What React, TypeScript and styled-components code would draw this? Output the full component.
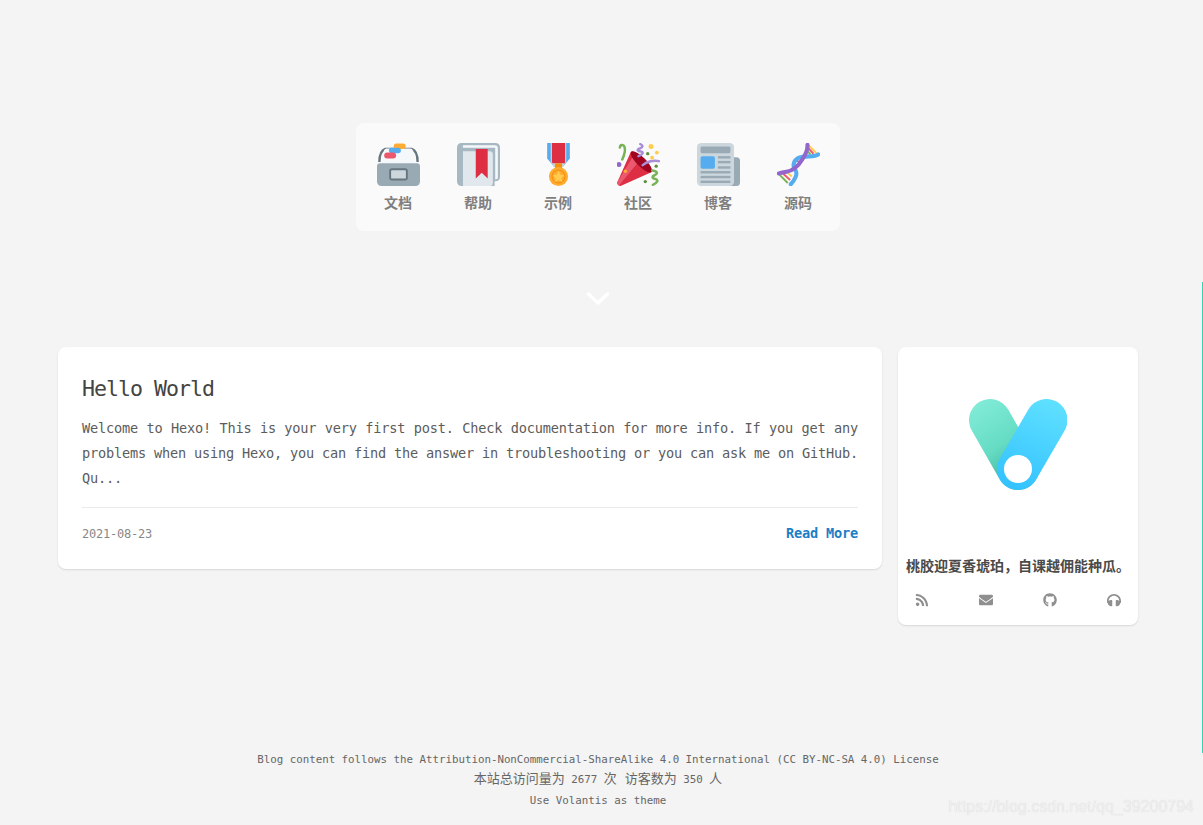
import React from "react";
import styled, { createGlobalStyle } from "styled-components";
import { FaRss, FaEnvelope, FaGithub, FaHeadphones } from "react-icons/fa";

const GlobalStyle = createGlobalStyle`
  html, body {
    margin: 0;
    padding: 0;
    background: #f4f4f4;
  }
  body {
    font-family: "Noto Sans", "Noto Sans CJK SC", sans-serif;
    overflow: hidden;
  }
`;

const mono = `"DejaVu Sans Mono", "Noto Sans CJK SC", monospace`;

const Page = styled.div`
  width: 1196px;
  height: 825px;
  padding-top: 123px;
  box-sizing: border-box;
  display: flex;
  flex-direction: column;
  align-items: center;
`;

const NavPanel = styled.nav`
  width: 484px;
  height: 108px;
  box-sizing: border-box;
  padding: 0 2px;
  display: flex;
  background: #fafafa;
  border-radius: 8px;
`;

const NavItem = styled.a`
  width: 80px;
  display: flex;
  flex-direction: column;
  align-items: center;
  padding-top: 20px;
  color: #7f7f7f;
  font-size: 14px;
  font-weight: 600;
  line-height: 18px;
`;

const NavIcon = styled.svg`
  width: 43px;
  height: 43px;
  margin-bottom: 8px;
`;

const Chevron = styled.svg`
  width: 24px;
  height: 15px;
  margin: 60px 0 41px;
  display: block;
`;

const Main = styled.main`
  width: 1080px;
  display: flex;
  align-items: flex-start;
  gap: 16px;
`;

const Card = styled.section`
  background: #fff;
  border-radius: 8px;
  box-shadow: 0 1px 2px rgba(0, 0, 0, 0.12);
`;

const PostCard = styled(Card)`
  width: 824px;
  height: 222px;
  box-sizing: border-box;
  padding: 24px;
`;

const PostTitle = styled.h2`
  margin: 0 0 10px;
  padding-top: 1px;
  font-family: ${mono};
  font-size: 21.6px;
  letter-spacing: -1px;
  font-weight: 400;
  line-height: 34px;
  color: #444;
`;

const PostBody = styled.p`
  margin: 0;
  font-family: ${mono};
  font-size: 13.6px;
  letter-spacing: -0.19px;
  line-height: 25px;
  color: #5c5c5c;
  text-align: justify;
`;

const PostMeta = styled.div`
  margin-top: 16px;
  border-top: 1px solid #eaeaea;
  padding-top: 17px;
  display: flex;
  justify-content: space-between;
  align-items: center;
`;

const PostDate = styled.span`
  font-family: ${mono};
  font-size: 12px;
  letter-spacing: -0.22px;
  color: #888;
  padding-top: 2px;
`;

const ReadMore = styled.a`
  font-family: ${mono};
  font-size: 13.6px;
  letter-spacing: -0.19px;
  font-weight: 700;
  color: #1c7ec6;
`;

const SideCard = styled(Card)`
  width: 240px;
  height: 278px;
  box-sizing: border-box;
  padding-top: 52px;
  display: flex;
  flex-direction: column;
  align-items: center;
`;

const Logo = styled.svg`
  width: 98px;
  height: 91px;
`;

const Quote = styled.div`
  margin-top: 66px;
  font-size: 14px;
  font-weight: 600;
  line-height: 20px;
  color: #4a4a4a;
  white-space: nowrap;
`;

const Social = styled.div`
  width: 100%;
  box-sizing: border-box;
  margin-top: 17px;
  padding: 0 17px;
  display: flex;
  justify-content: space-between;
  color: #8f8f8f;
  font-size: 14px;
  line-height: 14px;
`;

const Footer = styled.footer`
  margin-top: 126px;
  font-family: ${mono};
  color: #666;
  text-align: center;
  font-size: 10.8px;
  letter-spacing: -0.01px;
`;

const FooterLine = styled.div<{ $height: number }>`
  line-height: ${(p) => p.$height}px;
  white-space: nowrap;
`;

const FooterCjk = styled.span`
  font-size: 13px;
  letter-spacing: 0;
`;

const ScrollBar = styled.div`
  position: fixed;
  top: 282px;
  right: 0;
  width: 1px;
  height: 471px;
  background: #2fd8b5;
`;

const Watermark = styled.div`
  position: fixed;
  right: 9px;
  bottom: 8px;
  font-family: "Liberation Sans", sans-serif;
  font-size: 16px;
  line-height: 20px;
  color: #efefef;
  text-shadow: 0 0 1px #cfcfcf;
`;

const FileBoxIcon = () => (
  <NavIcon viewBox="0 0 36 36">
    <path d="M2 16 C2 9 4 6 7 5 L29 5 C32 6 34 9 34 16" fill="none" stroke="#66757F" strokeWidth="2" />
    <path d="M4 17 L6 6 Q6.5 4.5 8 4.5 L28 4.5 Q29.5 4.5 30 6 L32 17 Z" fill="#F5F8FA" />
    <rect x="14" y="0.5" width="10" height="4.5" rx="2.2" fill="#FFAC33" />
    <rect x="10" y="4" width="10" height="4.5" rx="2.2" fill="#55ACEE" />
    <rect x="6" y="8" width="10" height="5" rx="2.5" fill="#EA596E" />
    <path d="M0 19.5 Q0 17 2.5 17 L33.5 17 Q36 17 36 19.5 L36 32 Q36 36 32 36 L4 36 Q0 36 0 32 Z" fill="#99AAB5" />
    <rect x="11" y="22" width="14" height="8.5" rx="1.5" fill="#CCD6DD" stroke="#66757F" strokeWidth="1.6" />
  </NavIcon>
);

const BookIcon = () => (
  <NavIcon viewBox="0 0 36 36">
    <path d="M4 0 L32 0 Q36 0 36 4 L36 28 Q36 32 32 32 L4 32 Z" fill="#A8B8C2" />
    <path d="M5 1.8 L31.5 1.8 Q34.2 1.8 34.2 4.5 L34.2 29 Q34.2 30.5 32 30.5 L32 4 L5 4 Z" fill="#F5F8FA" />
    <path d="M4 0 L8 0 Q4 0.5 4 3.5 Q4 6 7 6 L28 6 Q31.5 6 31.5 9.5 L31.5 36 L4 36 Q0 36 0 32 L0 4 Q0 0 4 0 Z" fill="#A8B8C2" />
    <path d="M5 7 L27.5 7 Q30 7 30 9.5 L30 33.5 Q30 36 27.5 36 L5 36 Z" fill="#E1E8ED" />
    <path d="M15.7 5 L25.7 5 L25.7 29.7 L20.7 25 L15.7 29.7 Z" fill="#DD2E44" />
  </NavIcon>
);

const MedalIcon = () => (
  <NavIcon viewBox="0 0 36 36">
    <path d="M8.5 0 L27.5 0 L27.5 13 L21.5 20 L14.5 20 L8.5 13 Z" fill="#55ACEE" />
    <path d="M11.5 0 L24.5 0 L24.5 16 L21.5 20 L14.5 20 L11.5 16 Z" fill="#CCD6DD" />
    <path d="M12.5 0 L23.5 0 L23.5 17 L13 17 L12.5 16 Z" fill="#DD2E44" />
    <rect x="15" y="17" width="6" height="4" fill="#F4900C" />
    <circle cx="18" cy="28" r="8" fill="#FFAC33" />
    <circle cx="18" cy="28" r="5.4" fill="#FFAC33" stroke="#F4900C" strokeWidth="0.9" />
    <path d="M18 23.2 L19.5 26.6 L23 27 L20.3 29.3 L21.2 32.7 L18 30.9 L14.8 32.7 L15.7 29.3 L13 27 L16.5 26.6 Z" fill="#FFCC4D" />
  </NavIcon>
);

const PartyIcon = () => (
  <NavIcon viewBox="0 0 36 36">
    <path fill="#DD2E44" d="M11.626 7.488c-.112.112-.197.247-.268.395l-.008-.008L.134 33.141l.011.011c-.208.403.14 1.223.853 1.937.713.713 1.533 1.061 1.936.853l.01.01L28.21 24.735l-.008-.009c.147-.07.282-.155.395-.269 1.562-1.562-.971-6.627-5.656-11.313-4.687-4.686-9.752-7.218-11.315-5.656z" />
    <path fill="#EA596E" d="M13 12L.416 32.506l-.282.635.011.011c-.208.403.14 1.223.853 1.937.232.232.473.408.709.557L17 17l-4-5z" />
    <path fill="#A0041E" d="M23.012 13.066c4.67 4.672 7.263 9.652 5.789 11.124-1.473 1.474-6.453-1.118-11.126-5.788-4.671-4.672-7.263-9.654-5.79-11.127 1.474-1.473 6.454 1.119 11.127 5.791z" />
    <g fill="none" strokeWidth="2.1" strokeLinecap="round">
      <path d="M4.4 13.8 C6.4 9.5 7.2 6 6.3 3.2 C5.5 0.9 2.6 1.2 2.4 3.8" stroke="#77B255" />
      <path d="M19.5 1 C22 2 22 3.6 19 4.6 C16.4 5.4 17 7 20 7.2 C22.6 7.6 21.6 9.8 18 11" stroke="#AA8DD8" />
      <path d="M21.5 18.5 C25 15.5 31 14.2 35 15.2" stroke="#AA8DD8" />
      <path d="M29.5 23 C34 23.6 34.6 25.6 31.4 27 C28.8 28.2 29.6 29.8 32.2 30.2 C35 31 34 33.4 30 35" stroke="#77B255" />
    </g>
    <circle cx="28.5" cy="3" r="2.1" fill="#FFCC4D" />
    <circle cx="33.4" cy="8" r="1.6" fill="#FFCC4D" />
    <circle cx="29.4" cy="12.3" r="1.6" fill="#FFCC4D" />
    <circle cx="25.7" cy="8.9" r="1.4" fill="#5C913B" />
    <circle cx="32.8" cy="19.4" r="1.4" fill="#5C913B" />
    <circle cx="23.7" cy="32.3" r="1.4" fill="#5C913B" />
    <circle cx="1.6" cy="18" r="2.1" fill="#9266CC" />
    <circle cx="7" cy="23.7" r="1.5" fill="#FFAC33" />
  </NavIcon>
);

const NewsIcon = () => (
  <NavIcon viewBox="0 0 36 36">
    <path d="M26 12 L33 12 Q36 12 36 15 L36 33 Q36 36 33 36 L26 36 Z" fill="#99AAB5" />
    <rect x="0" y="0" width="31" height="36" rx="3.5" fill="#CCD6DD" />
    <rect x="3" y="3" width="25" height="5.5" rx="1.2" fill="#99AAB5" />
    <rect x="3" y="11" width="12" height="10.5" rx="1.5" fill="#55ACEE" />
    <rect x="17.5" y="11" width="10.5" height="2" fill="#99AAB5" />
    <rect x="17.5" y="15" width="10.5" height="2" fill="#99AAB5" />
    <rect x="17.5" y="19.5" width="10.5" height="2" fill="#99AAB5" />
    <rect x="3" y="23.5" width="25" height="2" fill="#99AAB5" />
    <rect x="3" y="27.5" width="25" height="2" fill="#99AAB5" />
    <rect x="3" y="31.5" width="25" height="2" fill="#99AAB5" />
  </NavIcon>
);

const DnaIcon = () => (
  <NavIcon viewBox="0 0 36 36">
    <g strokeWidth="1.6">
      <path d="M26 1.5 L33 8.5" stroke="#FFCC4D" />
      <path d="M25.5 3.5 L30.5 9" stroke="#EA596E" />
      <path d="M25 6 L28 9.5" stroke="#77B255" />
      <path d="M19 12.5 L22 15" stroke="#77B255" />
      <path d="M16 14 L20 17.5" stroke="#EA596E" />
      <path d="M14.5 17 L17.5 20" stroke="#FFCC4D" />
      <path d="M2 26.5 L9 33.5" stroke="#77B255" />
      <path d="M5 25.5 L11 31" stroke="#EA596E" />
      <path d="M9 25 L12.5 28" stroke="#FFCC4D" />
    </g>
    <path d="M34.5 9.5 C31 12.5 24 10 18 12.5 C13 15 13 20 15.5 23 C17.5 26 15 31 11.5 34.5" fill="none" stroke="#55ACEE" strokeWidth="3.4" strokeLinecap="round" />
    <path d="M25.5 1.5 C25.8 6 23 11 21 14 C18 19 14 23 8 24 C5 24.5 2.5 25 1.5 25.5" fill="none" stroke="#9266CC" strokeWidth="3.4" strokeLinecap="round" />
  </NavIcon>
);

const navItems = [
  { label: "文档", Icon: FileBoxIcon },
  { label: "帮助", Icon: BookIcon },
  { label: "示例", Icon: MedalIcon },
  { label: "社区", Icon: PartyIcon },
  { label: "博客", Icon: NewsIcon },
  { label: "源码", Icon: DnaIcon },
];

const VolantisLogo = () => (
  <Logo viewBox="969 399 98 91">
    <defs>
      <linearGradient id="teal" gradientUnits="userSpaceOnUse" x1="975" y1="402" x2="1022" y2="470">
        <stop offset="0" stopColor="#82ecd8" />
        <stop offset="0.6" stopColor="#66dcc4" />
        <stop offset="1" stopColor="#44b8a0" />
      </linearGradient>
      <linearGradient id="sky" gradientUnits="userSpaceOnUse" x1="1052" y1="400" x2="1015" y2="490">
        <stop offset="0" stopColor="#5fe0ff" />
        <stop offset="1" stopColor="#33c2ff" />
      </linearGradient>
    </defs>
    <line x1="990" y1="420" x2="1018" y2="469" stroke="url(#teal)" strokeWidth="42" strokeLinecap="round" />
    <line x1="1046.5" y1="420" x2="1018" y2="469" stroke="url(#sky)" strokeWidth="42" strokeLinecap="round" />
    <circle cx="1018" cy="469" r="14" fill="#fff" />
  </Logo>
);

export default function App() {
  return (
    <>
      <GlobalStyle />
      <Page>
        <NavPanel>
          {navItems.map(({ label, Icon }) => (
            <NavItem key={label}>
              <Icon />
              {label}
            </NavItem>
          ))}
        </NavPanel>
        <Chevron viewBox="0 0 24 15">
          <path d="M2.5 3 L12 12 L21.5 3" fill="none" stroke="#fff" strokeWidth="3.4" strokeLinecap="round" strokeLinejoin="round" />
        </Chevron>
        <Main>
          <PostCard>
            <PostTitle>Hello World</PostTitle>
            <PostBody>
              Welcome to Hexo! This is your very first post. Check documentation for more info. If you get any
              problems when using Hexo, you can find the answer in troubleshooting or you can ask me on GitHub. Qu...
            </PostBody>
            <PostMeta>
              <PostDate>2021-08-23</PostDate>
              <ReadMore>Read More</ReadMore>
            </PostMeta>
          </PostCard>
          <SideCard>
            <VolantisLogo />
            <Quote>桃胶迎夏香琥珀，自课越佣能种瓜。</Quote>
            <Social>
              <FaRss />
              <FaEnvelope />
              <FaGithub />
              <FaHeadphones />
            </Social>
          </SideCard>
        </Main>
        <Footer>
          <FooterLine $height={18}>
            Blog content follows the Attribution-NonCommercial-ShareAlike 4.0 International (CC BY-NC-SA 4.0) License
          </FooterLine>
          <FooterLine $height={20}>
            <FooterCjk>本站总访问量为</FooterCjk> 2677 <FooterCjk>次 访客数为</FooterCjk> 350 <FooterCjk>人</FooterCjk>
          </FooterLine>
          <FooterLine $height={21}>Use Volantis as theme</FooterLine>
        </Footer>
      </Page>
      <ScrollBar />
      <Watermark>https://blog.csdn.net/qq_39200794</Watermark>
    </>
  );
}
